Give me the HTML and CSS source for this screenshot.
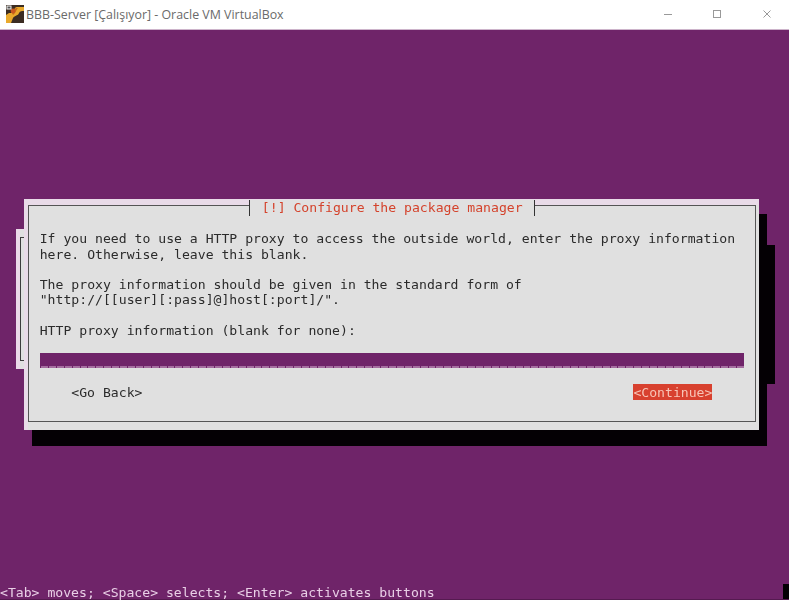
FILE: index.html
```html
<!DOCTYPE html>
<html lang="tr">
<head>
<meta charset="utf-8">
<title>BBB-Server [Çalışıyor] - Oracle VM VirtualBox</title>
<link rel="stylesheet" href="styles.css">
</head>
<body>
<header class="titlebar">
  <svg class="app-icon" viewBox="0 0 18 18" aria-hidden="true">
    <rect width="18" height="18" fill="#3b2c22"/>
    <path d="M18 2 L11 2 C8 2 8 7 5 8 L3 8 L0 10 L0 18 L5 18 L7 13 C9 10 12 11 13 8 C14 6 16 6 18 6 Z" fill="#e9a92c"/>
    <path d="M6 8 C8 7 8 4 10 3 L12 3 C10 5 10 8 7 10 Z" fill="#c4701c"/>
    <circle cx="7" cy="6" r="2.4" fill="#c9561f"/>
    <rect x="0.5" y="0.5" width="5" height="4" fill="#f4f4f4"/>
    <rect x="1.5" y="1.5" width="3" height="2" fill="#555"/>
  </svg>
  <span class="window-title">BBB-Server [Çalışıyor] - Oracle VM VirtualBox</span>
  <div class="controls">
    <svg class="ctl" viewBox="0 0 8 8" aria-hidden="true"><path d="M0 4.5H8"/></svg>
    <svg class="ctl" viewBox="0 0 8 8" aria-hidden="true"><rect x="0.5" y="0.5" width="7" height="7"/></svg>
    <svg class="ctl" viewBox="0 0 8 8" aria-hidden="true"><path d="M0.5 0.5L7.5 7.5M7.5 0.5L0.5 7.5"/></svg>
  </div>
</header>
<main class="terminal">
  <div class="shadow-back"></div>
  <div class="dialog-back"><div class="frame-back"></div></div>
  <div class="shadow-main"></div>
  <section class="dialog">
    <div class="frame">
      <h1 class="dialog-title">[!] Configure the package manager</h1>
      <p class="lines">If you need to use a HTTP proxy to access the outside world, enter the proxy information
here. Otherwise, leave this blank.</p>
      <p class="lines">The proxy information should be given in the standard form of
"http://[[user][:pass]@]host[:port]/".</p>
      <p class="lines lines-last">HTTP proxy information (blank for none):</p>
      <div class="field"></div>
      <div class="buttons">
        <span class="btn">&lt;Go Back&gt;</span>
        <span class="btn btn-active">&lt;Continue&gt;</span>
      </div>
    </div>
  </section>
  <div class="status">&lt;Tab&gt; moves; &lt;Space&gt; selects; &lt;Enter&gt; activates buttons</div>
  <div class="cursor"></div>
</main>
</body>
</html>
```

FILE: styles.css
```css
* { box-sizing: border-box; }
html, body { margin: 0; height: 100%; overflow: hidden; }
body { display: flex; flex-direction: column; background: #fff; }

.titlebar {
  flex: 0 0 30px;
  display: flex;
  align-items: center;
  background: #fff;
  border-bottom: 1px solid #cdb4cb;
  padding: 0 0 1px 6px;
  font-family: "Open Sans", sans-serif;
  font-size: 12.4px;
  color: #6a6a6a;
}
.app-icon { width: 18px; height: 18px; flex: none; margin-right: 2px; }
.window-title { white-space: nowrap; }
.controls { margin-left: auto; display: flex; align-items: center; padding-right: 18.5px; gap: 41.5px; }
.ctl { width: 8px; height: 8px; fill: none; stroke: #999; stroke-width: 1; display: block; }

.terminal {
  flex: 1;
  display: grid;
  grid-template-columns: repeat(100, 7.91px);
  grid-template-rows: repeat(37, 15.4px);
  background: #6f2469;
  box-shadow: inset 0 -1px 0 #551a50;
  overflow: hidden;
  font-family: "DejaVu Sans Mono", monospace;
  font-size: 13.14px;
  line-height: 15.4px;
  color: #2b2b2b;
  filter: blur(0.3px);
}

.shadow-back { grid-column: 4 / 99; grid-row: 15 / 24; background: #040004; }
.dialog-back {
  grid-column: 3 / 98;
  grid-row: 14 / 23;
  margin-top: -1px;
  background: #e0e0e0;
  border-top: 1px solid #ead9e8;
  border-left: 4px solid #ead9e8;
  padding: 7px 0 8px;
}
.frame-back { height: 100%; border: 1px solid #3c3c3c; }
.shadow-main { grid-column: 5 / 98; grid-row: 13 / 28; margin-top: -1px; background: #040004; }

.dialog {
  grid-column: 4 / 97;
  grid-row: 12 / 27;
  background: #e0e0e0;
  border-top: 6px solid #e9dbe8;
  border-left: 4px solid #e9dbe8;
  padding: 0 3px 8px 0;
}
.frame {
  position: relative;
  height: 100%;
  border: 1px solid #555;
  padding: 25px 11px 0 11px;
}
.dialog-title {
  position: absolute;
  top: -6px;
  left: 220.5px;
  width: 286px;
  height: 15.4px;
  margin: 0;
  background: #e0e0e0;
  border-left: 1px solid #333;
  border-right: 1px solid #333;
  text-align: center;
  font: inherit;
  color: #d4432c;
  white-space: nowrap;
}
.lines { margin: 0 0 14.8px; white-space: pre; }
.lines-last { margin-bottom: 14.8px; }
.field {
  width: 704px;
  height: 15.4px;
  background:
    linear-gradient(#6f2469 0 13px, transparent 13px),
    repeating-linear-gradient(90deg, #6f2469 0 1px, #a56ea0 1px 7.91px);
}
.buttons {
  display: flex;
  justify-content: space-between;
  margin-top: 16.2px;
  padding: 0 31.6px;
}
.btn { display: block; height: 15.4px; padding-top: 1px; }
.btn-active { background: #d8412f; color: #f7c4b6; }

.status {
  grid-column: 1 / -1;
  grid-row: 37;
  padding-top: 1px;
  color: #e9cfe6;
  white-space: pre;
}
.cursor { grid-column: 100; grid-row: 37; background: #040004; }
```
